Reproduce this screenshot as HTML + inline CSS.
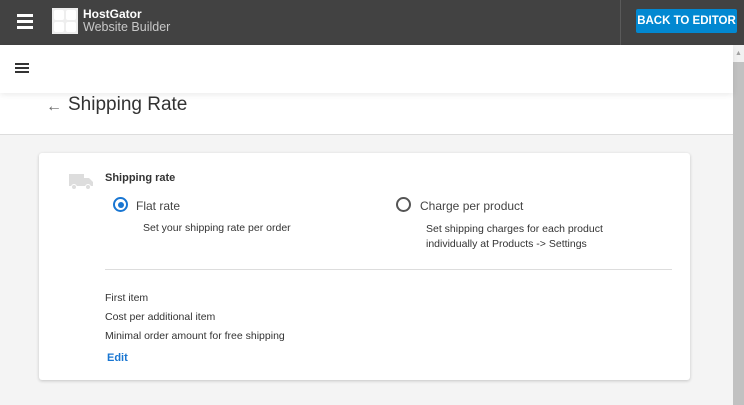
<!DOCTYPE html>
<html><head><style>
*{margin:0;padding:0;box-sizing:border-box}
body{width:744px;height:405px;overflow:hidden;background:#f4f4f4;font-family:"Liberation Sans",sans-serif;position:relative}
.top{position:absolute;left:0;top:0;width:744px;height:45px;background:#424242}
.hb{position:absolute;left:17px;width:16px;height:3px;background:#fff}
.logo{position:absolute;left:52px;top:8px;width:26px;height:26px;background:#eee}
.logo i{position:absolute;width:10px;height:10px;background:#fff;border-radius:2px}
.bt{position:absolute;left:83px;top:7px;color:#fff;font-weight:bold;font-size:12px}
.bt2{position:absolute;left:83px;top:20px;color:#c8c8c8;font-size:12.5px}
.sep{position:absolute;left:620px;top:0;width:1px;height:45px;background:#5a5a5a}
.btn{position:absolute;left:636px;top:9px;width:101px;height:24px;background:#0288d1;color:#fff;font-size:11.5px;font-weight:bold;text-align:center;line-height:24px;border-radius:2px;white-space:nowrap;overflow:hidden}
.h2{position:absolute;left:0;top:45px;width:733px;height:48px;background:#fff;box-shadow:0 2px 6px rgba(0,0,0,.08);z-index:2}
.h3{position:absolute;left:0;top:93px;width:733px;height:42px;background:#fff;border-bottom:1px solid #ddd}
.title{position:absolute;left:68px;top:94px;font-size:19px;color:#333}
.sb{position:absolute;left:733px;top:45px;width:11px;height:360px;background:#c1c1c1}
.card{position:absolute;left:39px;top:153px;width:651px;height:227px;background:#fff;border-radius:3px;box-shadow:0 1px 3px rgba(0,0,0,.2)}
.t{position:absolute;font-size:11px;color:#333;white-space:nowrap}
</style></head><body>
<div class="top">
<div class="hb" style="top:14px"></div><div class="hb" style="top:20px"></div><div class="hb" style="top:26px"></div>
<div class="logo"><i style="left:2px;top:2px"></i><i style="left:14px;top:2px"></i><i style="left:2px;top:14px"></i><i style="left:14px;top:14px"></i></div>
<div class="bt">HostGator</div><div class="bt2">Website Builder</div>
<div class="sep"></div>
<div class="btn">BACK TO EDITOR</div>
</div>
<div class="h2">
<div style="position:absolute;left:15px;top:18px;width:14px;height:2px;background:#333"></div>
<div style="position:absolute;left:15px;top:22px;width:14px;height:2px;background:#333"></div>
<div style="position:absolute;left:15px;top:26px;width:14px;height:2px;background:#333"></div>
</div>
<div class="h3"></div>
<div style="position:absolute;left:46px;top:98px;font-size:16px;color:#666">&#8592;</div>
<div class="title">Shipping Rate</div>
<div class="sb"><div style="width:11px;height:17px;background:#f1f1f1;color:#a0a0a0;font-size:7px;text-align:center;line-height:17px">&#9650;</div></div>
<div class="card">
<svg style="position:absolute;left:30px;top:21px" width="24" height="16" viewBox="0 0 24 16"><rect x="0" y="0" width="15" height="12" fill="#ddd"/><path d="M15 4h5l4 4v4h-9z" fill="#ddd"/><circle cx="5" cy="13" r="2.5" fill="#ddd" stroke="#fff"/><circle cx="19" cy="13" r="2.5" fill="#ddd" stroke="#fff"/></svg>
<div class="t" style="left:66px;top:19px;font-weight:bold">Shipping rate</div>
<div style="position:absolute;left:74px;top:44px;width:15px;height:15px;border:2px solid #1976d2;border-radius:50%"><div style="position:absolute;left:2.5px;top:2.5px;width:6px;height:6px;background:#1976d2;border-radius:50%"></div></div>
<div class="t" style="left:97px;top:46px;font-size:12px;color:#444">Flat rate</div>
<div class="t" style="left:104px;top:69px;font-size:10.5px">Set your shipping rate per order</div>
<div style="position:absolute;left:357px;top:44px;width:15px;height:15px;border:2px solid #555;border-radius:50%"></div>
<div class="t" style="left:381px;top:46px;font-size:12px;color:#444">Charge per product</div>
<div class="t" style="left:387px;top:69px;font-size:10.5px;line-height:15px">Set shipping charges for each product<br>individually at Products -&gt; Settings</div>
<div style="position:absolute;left:66px;top:116px;width:567px;height:1px;background:#ddd"></div>
<div class="t" style="left:66px;top:139px;font-size:10.5px">First item</div>
<div class="t" style="left:66px;top:158px;font-size:10.5px">Cost per additional item</div>
<div class="t" style="left:66px;top:177px;font-size:10.5px">Minimal order amount for free shipping</div>
<div class="t" style="left:68px;top:199px;font-size:11px;color:#1976d2;font-weight:bold">Edit</div>
</div>
</body></html>
